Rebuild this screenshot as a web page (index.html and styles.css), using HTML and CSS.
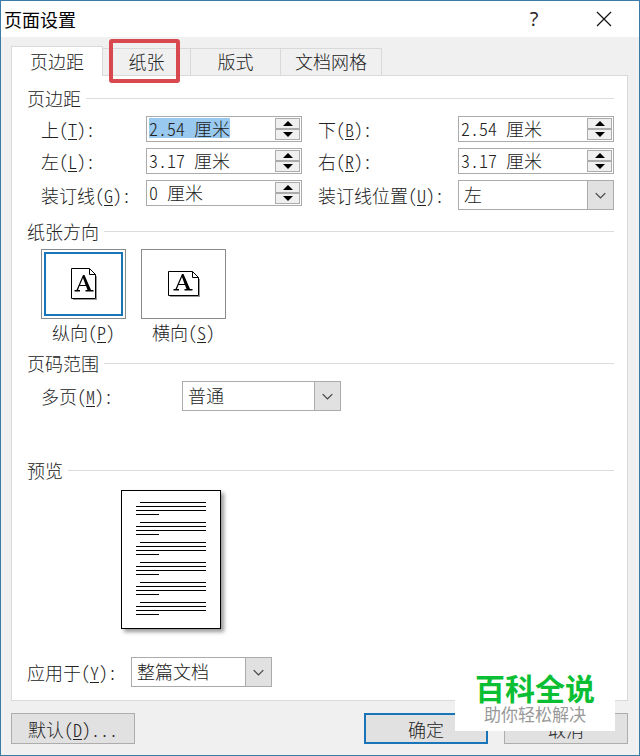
FILE: index.html
```html
<!DOCTYPE html>
<html lang="zh-CN">
  <head>
    <meta charset="utf-8">
    <title>页面设置</title>
    <link rel="stylesheet" href="styles.css">
  </head>
  <body>
    <form class="dialog" id="page-setup">
      <header class="titlebar">
        <h1>页面设置</h1>
        <button type="button" class="title-button help" aria-label="帮助">?</button>
        <button type="button" class="title-button" aria-label="关闭">
          <svg width="16" height="16" viewBox="0 0 16 16"><path d="M1 1L15 15M15 1L1 15" fill="none" stroke="#111" stroke-width="1.2"/></svg>
        </button>
      </header>

      <main class="content">
        <div class="tabs" role="tablist">
          <button type="button" class="tab active" role="tab" aria-selected="true">页边距</button>
          <button type="button" class="tab marked" role="tab">纸张</button>
          <button type="button" class="tab" role="tab">版式</button>
          <button type="button" class="tab wide" role="tab">文档网格</button>
        </div>

        <div class="panel" role="tabpanel">
          <fieldset class="margins">
            <legend>页边距</legend>
            <div class="fields">
              <label for="top">上(<u>T</u>):</label>
              <div class="spinner">
                <input type="text" id="top" value="2.54 厘米">
                <button type="button" class="up" aria-label="增加"></button>
                <button type="button" class="down" aria-label="减少"></button>
              </div>
              <label for="bottom" class="second">下(<u>B</u>):</label>
              <div class="spinner">
                <input type="text" id="bottom" value="2.54 厘米">
                <button type="button" class="up" aria-label="增加"></button>
                <button type="button" class="down" aria-label="减少"></button>
              </div>
              <label for="left">左(<u>L</u>):</label>
              <div class="spinner">
                <input type="text" id="left" value="3.17 厘米">
                <button type="button" class="up" aria-label="增加"></button>
                <button type="button" class="down" aria-label="减少"></button>
              </div>
              <label for="right" class="second">右(<u>R</u>):</label>
              <div class="spinner">
                <input type="text" id="right" value="3.17 厘米">
                <button type="button" class="up" aria-label="增加"></button>
                <button type="button" class="down" aria-label="减少"></button>
              </div>
              <label for="gutter">装订线(<u>G</u>):</label>
              <div class="spinner">
                <input type="text" id="gutter" value="0 厘米">
                <button type="button" class="up" aria-label="增加"></button>
                <button type="button" class="down" aria-label="减少"></button>
              </div>
              <label for="gutter-pos" class="second">装订线位置(<u>U</u>):</label>
              <div class="dropdown">
                <select id="gutter-pos"><option>左</option></select>
                <svg class="arrow" viewBox="0 0 26 28"><path d="M8 12L13 17L18 12" fill="none" stroke="#444" stroke-width="1.3"/></svg>
              </div>
            </div>
          </fieldset>

          <fieldset class="orientation">
            <legend>纸张方向</legend>
            <div class="choices">
              <label class="choice">
                <input type="radio" name="orientation" value="portrait" checked>
                <span class="tile">
                  <svg width="26" height="32" viewBox="0 0 26 32">
                    <path d="M2 31.5H26M25.5 8V31" stroke="#999" fill="none"/>
                    <path d="M.5 .5H18.5L24.5 6.5V30.5H.5ZM18.5 .5V6.5H24.5" fill="#fff" stroke="#000"/>
                    <path d="M12 7H13.5L20 22H22.5V23.5H14.5V22H16.5L15 18H8.5L7 22H9V23.5H3.5V22H5.5ZM12 10L9 17H14.5Z" fill="#000" fill-rule="evenodd"/>
                  </svg>
                </span>
                <span>纵向(<u>P</u>)</span>
              </label>
              <label class="choice">
                <input type="radio" name="orientation" value="landscape">
                <span class="tile">
                  <svg width="32" height="26" viewBox="0 0 32 26">
                    <path d="M2 25.5H32M31.5 8V25" stroke="#999" fill="none"/>
                    <path d="M.5 .5H24.5L30.5 6.5V24.5H.5ZM24.5 .5V6.5H30.5" fill="#fff" stroke="#000"/>
                    <path d="M14 3H15.5L22 18H24.5V19.5H16.5V18H18.5L17 14H10.5L9 18H11V19.5H5.5V18H7.5ZM14 6L11 13H16.5Z" fill="#000" fill-rule="evenodd"/>
                  </svg>
                </span>
                <span>横向(<u>S</u>)</span>
              </label>
            </div>
          </fieldset>

          <fieldset class="pages">
            <legend>页码范围</legend>
            <div class="row">
              <label for="multi">多页(<u>M</u>):</label>
              <div class="dropdown">
                <select id="multi"><option>普通</option></select>
                <svg class="arrow" viewBox="0 0 26 28"><path d="M8 12L13 17L18 12" fill="none" stroke="#444" stroke-width="1.3"/></svg>
              </div>
            </div>
          </fieldset>

          <fieldset class="preview">
            <legend>预览</legend>
            <svg class="sheet" width="100" height="139" viewBox="0 0 100 139" role="img" aria-label="预览">
              <defs>
                <path id="para" d="M19 0H85M15 4H85M15 8H85M15 12H38" stroke="#000"/>
              </defs>
              <rect x=".5" y=".5" width="99" height="138" fill="#fff" stroke="#000"/>
              <use href="#para" y="12.5"/>
              <use href="#para" y="32.5"/>
              <use href="#para" y="52.5"/>
              <use href="#para" y="72.5"/>
              <use href="#para" y="92.5"/>
              <use href="#para" y="112.5"/>
            </svg>
          </fieldset>

          <div class="apply">
            <label for="apply-to">应用于(<u>Y</u>):</label>
            <div class="dropdown">
              <select id="apply-to"><option>整篇文档</option></select>
              <svg class="arrow" viewBox="0 0 26 28"><path d="M8 12L13 17L18 12" fill="none" stroke="#444" stroke-width="1.3"/></svg>
            </div>
          </div>
        </div>

        <footer class="actions">
          <button type="button" class="action">默认(<u>D</u>)...</button>
          <button type="submit" class="action primary">确定</button>
          <button type="button" class="action">取消</button>
        </footer>
      </main>

      <div class="watermark">
        <strong>百科全说</strong>
        <span>助你轻松解决</span>
      </div>
    </form>

    <script>
      document.addEventListener('DOMContentLoaded', () => {
        let first = document.getElementById('top');
        first.focus();
        first.select();
      });
    </script>
  </body>
</html>
```
FILE: styles.css
```css
* {
  box-sizing: border-box;
}

body {
  margin: 0;
}

body, button, input, select {
  font-family: "Noto Sans CJK SC", sans-serif;
  font-size: 18px;
  font-weight: 300;
  font-feature-settings: "hwid";
  line-height: 22px;
  color: #222;
}

button, input, select {
  margin: 0;
  padding: 0;
  border-radius: 0;
  outline: none;
}

u {
  text-underline-offset: 2px;
  text-decoration-thickness: 1px;
}

.dialog {
  position: relative;
  display: flex;
  flex-direction: column;
  min-height: 100vh;
  border: 1px solid #3a7ca5;
  background: #f0f0f0;
}

.titlebar {
  display: flex;
  align-items: center;
  height: 36px;
  padding: 0 21px 0 3px;
  background: #fff;
}

.titlebar h1 {
  flex: 1;
  margin: 0;
  font-size: 18px;
  font-weight: 400;
  color: #000;
}

.title-button {
  display: flex;
  align-items: center;
  justify-content: center;
  width: 28px;
  height: 28px;
  border: none;
  background: none;
}

.help {
  margin-right: 42px;
  font-family: "Open Sans", sans-serif;
  font-size: 20px;
  font-weight: 400;
}

.content {
  padding: 9px 11px 10px 10px;
}

.tabs {
  display: flex;
  align-items: flex-end;
}

.tab {
  position: relative;
  width: 90px;
  height: 27px;
  padding-bottom: 2px;
  border: 1px solid #d9d9d9;
  border-width: 1px 1px 0 0;
  background: #f0f0f0;
}

.tab.active {
  z-index: 1;
  width: 92px;
  height: 30px;
  margin-bottom: -1px;
  border-left-width: 1px;
  background: #fff;
}

.tab.marked {
  width: 88px;
}

.tab.wide {
  width: 101px;
}

/* red frame around the paper tab */
.marked::after {
  content: "";
  position: absolute;
  z-index: 2;
  inset: -10px 10px -8px 6px;
  border: 4px solid #d9484f;
  border-radius: 3px;
}

.panel {
  padding: 10px 13px 13px 15px;
  border: 1px solid #d9d9d9;
  background: #fff;
}

fieldset {
  min-width: 0;
  margin: 0;
  padding: 0;
  border: none;
}

legend {
  display: flex;
  align-items: center;
  gap: 5px;
  width: 100%;
  height: 24px;
  margin-bottom: 6px;
  padding: 0;
}

legend::after {
  content: "";
  flex: 1;
  height: 1px;
  background: #dcdcdc;
}

.margins {
  margin-bottom: 9px;
}

.fields {
  display: grid;
  grid-template-columns: 105px 1fr 156px 1fr;
  row-gap: 6px;
  padding-left: 14px;
}

.fields label {
  align-self: center;
}

.second {
  padding-left: 16px;
}

.spinner {
  display: grid;
  grid-template-columns: 1fr 25px;
  grid-template-rows: 11px 11px;
  align-self: start;
  padding: 1px;
  border: 1px solid #ababab;
}

.spinner input {
  grid-row: 1 / 3;
  min-width: 0;
  height: 20px;
  padding-left: 1px;
  border: none;
  background: none;
}

.spinner input::selection {
  background: #99c9ef;
  color: #222;
}

.up, .down {
  display: flex;
  align-items: center;
  justify-content: center;
  border: 1px solid #ababab;
  background: #f0f0f0;
}

.up::before, .down::before {
  content: "";
  border: 5px solid transparent;
}

.up::before {
  border-top: none;
  border-bottom-color: #000;
}

.down::before {
  border-bottom: none;
  border-top-color: #000;
}

.dropdown {
  position: relative;
  height: 30px;
}

.dropdown select {
  width: 100%;
  height: 30px;
  padding: 0 30px 2px 5px;
  border: 1px solid #ababab;
  background: #fff;
  appearance: none;
}

.arrow {
  position: absolute;
  top: 0;
  right: 0;
  width: 27px;
  height: 30px;
  border: 1px solid #ababab;
  background: #e1e1e1;
  pointer-events: none;
}

.orientation {
  margin-bottom: 6px;
}

.choices {
  display: flex;
  gap: 15px;
  padding-left: 14px;
}

.choice {
  display: flex;
  flex-direction: column;
  align-items: center;
  gap: 2px;
  padding-bottom: 2px;
}

.choice input {
  position: absolute;
  opacity: 0;
}

.tile {
  display: flex;
  align-items: center;
  justify-content: center;
  width: 85px;
  height: 70px;
  border: 1px solid #8a8a8a;
}

.choice input:checked + .tile {
  outline: 2px solid #1a74b8;
  outline-offset: -5px;
}

.pages {
  margin-bottom: 47px;
}

.row {
  display: grid;
  grid-template-columns: 141px 159px;
  align-items: center;
  padding-left: 14px;
}

.preview {
  margin-bottom: 28px;
}

.sheet {
  display: block;
  margin: 2px 0 0 94px;
  box-shadow: 3px 3px 4px #999;
}

.apply {
  display: grid;
  grid-template-columns: 104px 141px;
  align-items: center;
}

.actions {
  display: flex;
  gap: 16px;
  margin-top: 12px;
}

.action {
  width: 124px;
  height: 31px;
  border: 1px solid #adadad;
  background: #e1e1e1;
}

.action:first-child {
  margin-right: auto;
}

.primary {
  border: 2px solid #1a74b8;
}

.watermark {
  position: absolute;
  right: 24px;
  bottom: 24px;
  display: flex;
  flex-direction: column;
  align-items: center;
  width: 160px;
  padding: 4px 0 6px;
  background: #fff;
}

.watermark strong {
  font-size: 30px;
  font-weight: 700;
  line-height: 32px;
  color: #0bbf35;
}

.watermark span {
  font-size: 17px;
  font-weight: 400;
  color: #999;
}
```
